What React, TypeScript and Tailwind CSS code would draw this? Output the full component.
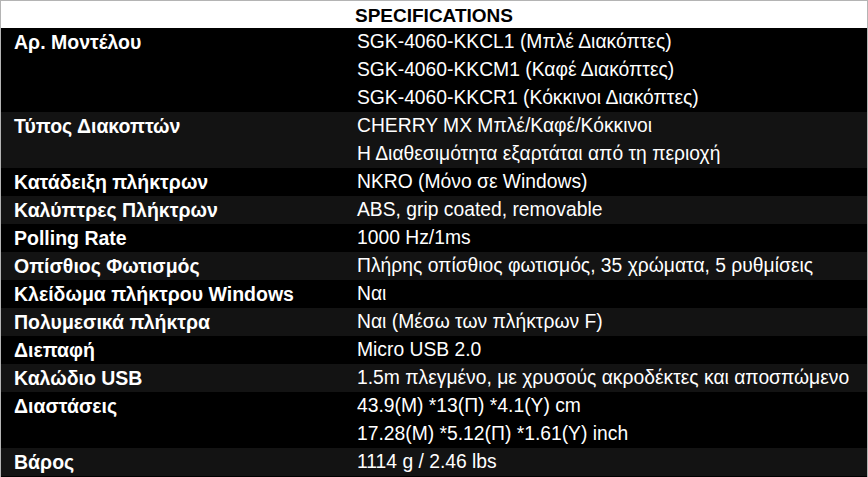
import React from "react";

const rows: [string, string[]][] = [
  ["Αρ. Μοντέλου", ["SGK-4060-KKCL1 (Μπλέ Διακόπτες)", "SGK-4060-KKCM1 (Καφέ Διακόπτες)", "SGK-4060-KKCR1 (Κόκκινοι Διακόπτες)"]],
  ["Τύπος Διακοπτών", ["CHERRY MX Μπλέ/Καφέ/Κόκκινοι", "Η Διαθεσιμότητα εξαρτάται από τη περιοχή"]],
  ["Κατάδειξη πλήκτρων", ["NKRO (Μόνο σε Windows)"]],
  ["Καλύπτρες Πλήκτρων", ["ABS, grip coated, removable"]],
  ["Polling Rate", ["1000 Hz/1ms"]],
  ["Οπίσθιος Φωτισμός", ["Πλήρης οπίσθιος φωτισμός, 35 χρώματα, 5 ρυθμίσεις"]],
  ["Κλείδωμα πλήκτρου Windows", ["Ναι"]],
  ["Πολυμεσικά πλήκτρα", ["Ναι (Μέσω των πλήκτρων F)"]],
  ["Διεπαφή", ["Micro USB 2.0"]],
  ["Καλώδιο USB", ["1.5m πλεγμένο, με χρυσούς ακροδέκτες και αποσπώμενο"]],
  ["Διαστάσεις", ["43.9(Μ) *13(Π) *4.1(Υ) cm", "17.28(Μ) *5.12(Π) *1.61(Υ) inch"]],
  ["Βάρος", ["1114 g / 2.46 lbs"]],
];

export default function App() {
  return (
    <div className="w-[868px] h-[477px] overflow-hidden border-x border-t border-[#b4b4b4] bg-black">
      <div className="h-[27px] bg-white flex items-center justify-center text-black font-bold text-[19px] leading-none pt-[2px] font-['Liberation_Sans',Arial,sans-serif]">
        SPECIFICATIONS
      </div>
      {rows.map(([label, vals], i) => (
        <div key={i} className={i % 2 === 0 ? "flex bg-black" : "flex bg-[#131313]"}>
          <div className="w-[356px] pl-[13px] text-white font-bold text-[19.5px] leading-[28px] font-['Liberation_Sans',Arial,sans-serif]">
            {label}
          </div>
          <div className="flex-1 text-white text-[19.3px] leading-[28px] font-['Liberation_Sans_Narrow','Liberation_Sans',Arial,sans-serif]">
            {vals.map((v, j) => (
              <div key={j}>{v}</div>
            ))}
          </div>
        </div>
      ))}
    </div>
  );
}
